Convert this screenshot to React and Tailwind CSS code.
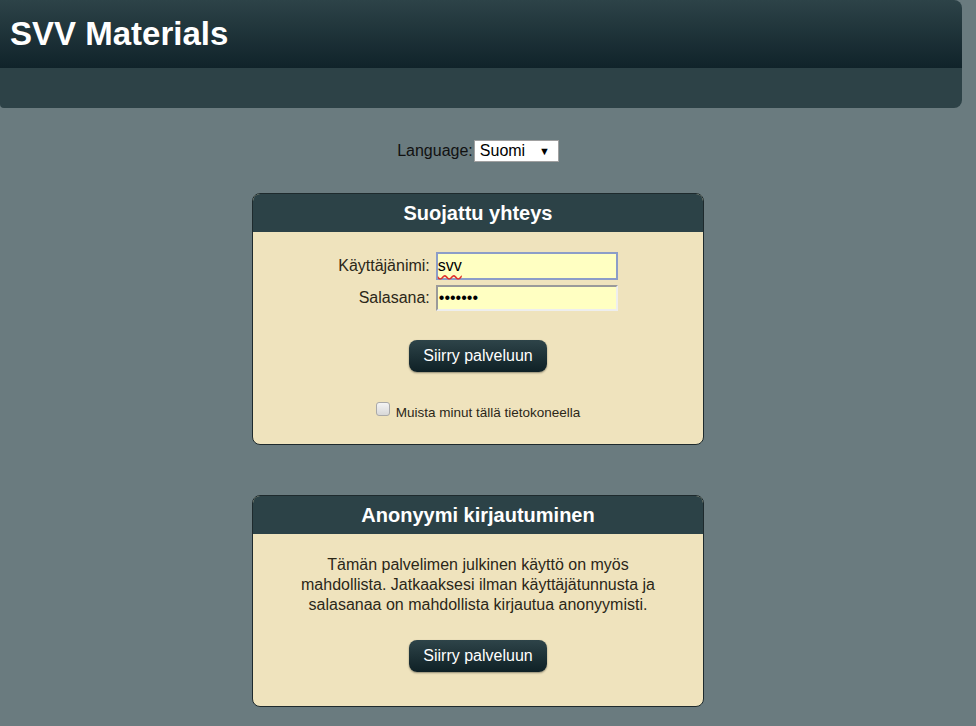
import React from 'react'

const Button = ({ label }) => (
    <button className='h-[32px] w-[138px] rounded-[8px] bg-gradient-to-b from-[#2e4449] to-[#0f2126] text-white text-[16px] shadow-[0_1px_2px_rgba(0,0,0,0.4)]'>
        {label}
    </button>
)

const Card = ({ title, children }) => (
    <section className='w-[452px] rounded-[8px] border border-[#1e2a2d] bg-[#efe3bd] overflow-hidden'>
        <div className='h-[38px] bg-[#2c4247] flex items-center justify-center text-white text-[20px] font-bold'>
            {title}
        </div>
        {children}
    </section>
)

const App = () => {
    return (
        <div className='min-h-[726px] bg-[#6a7b7f] text-[#2b2718]' style={{ fontFamily: '"Liberation Sans", Arial, sans-serif' }}>
            <header className='w-[962px] rounded-r-[8px] rounded-bl-[4px] overflow-hidden'>
                <div className='h-[68px] flex items-center px-[10px] bg-gradient-to-b from-[#2d4348] to-[#10232a]'>
                    <h1 className='text-white text-[33px] font-bold'>SVV Materials</h1>
                </div>
                <div className='h-[40px] bg-[#2d4247]'></div>
            </header>

            <main className='w-[956px] flex flex-col items-center'>
                <div className='mt-[31px] flex items-center text-[16px] text-[#111]'>
                    <span>Language:</span>
                    <div className='ml-[1px] h-[22px] w-[85px] bg-white border border-[#a0a0a0] flex items-center justify-between pl-[5px] pr-[8px]'>
                        <span className='text-black'>Suomi</span>
                        <span className='text-[11px] text-black'>▼</span>
                    </div>
                </div>

                <div className='mt-[30px]'>
                    <Card title='Suojattu yhteys'>
                        <div className='pt-[20px] pb-[21px] flex flex-col items-center'>
                            <div className='grid grid-cols-[auto_auto] gap-x-[6px] gap-y-[5px] items-center text-[16px]'>
                                <label className='text-right'>Käyttäjänimi:</label>
                                <div className='h-[28px] w-[182px] bg-[#ffffc2] border-2 border-[#8c9dc8] flex items-center text-[16px] text-black'>
                                    <span className='underline decoration-wavy decoration-[#e0302a] underline-offset-[3px]'>svv</span>
                                </div>
                                <label className='text-right'>Salasana:</label>
                                <div className='h-[26px] w-[182px] bg-[#ffffc2] border-2 border-t-[#9a9a9a] border-l-[#9a9a9a] border-b-[#eeeeee] border-r-[#eeeeee] flex items-center pl-[1px] text-[16px] text-black'>
                                    •••••••
                                </div>
                            </div>
                            <div className='mt-[29px]'>
                                <Button label='Siirry palveluun' />
                            </div>
                            <label className='mt-[31px] flex items-center text-[13.5px]'>
                                <span className='w-[14px] h-[14px] rounded-[3px] border border-[#a9a9a9] bg-gradient-to-b from-[#f4f4f4] to-[#d8d8d8] mr-[6px] -mt-[9px]'></span>
                                Muista minut tällä tietokoneella
                            </label>
                        </div>
                    </Card>
                </div>

                <div className='mt-[50px]'>
                    <Card title='Anonyymi kirjautuminen'>
                        <div className='pt-[21px] pb-[34px] px-[44px] flex flex-col items-center'>
                            <p className='text-[16px] leading-[20px] text-center'>
                                Tämän palvelimen julkinen käyttö on myös mahdollista. Jatkaaksesi ilman käyttäjätunnusta ja salasanaa on mahdollista kirjautua anonyymisti.
                            </p>
                            <div className='mt-[25px]'>
                                <Button label='Siirry palveluun' />
                            </div>
                        </div>
                    </Card>
                </div>
            </main>
        </div>
    )
}

export default App
